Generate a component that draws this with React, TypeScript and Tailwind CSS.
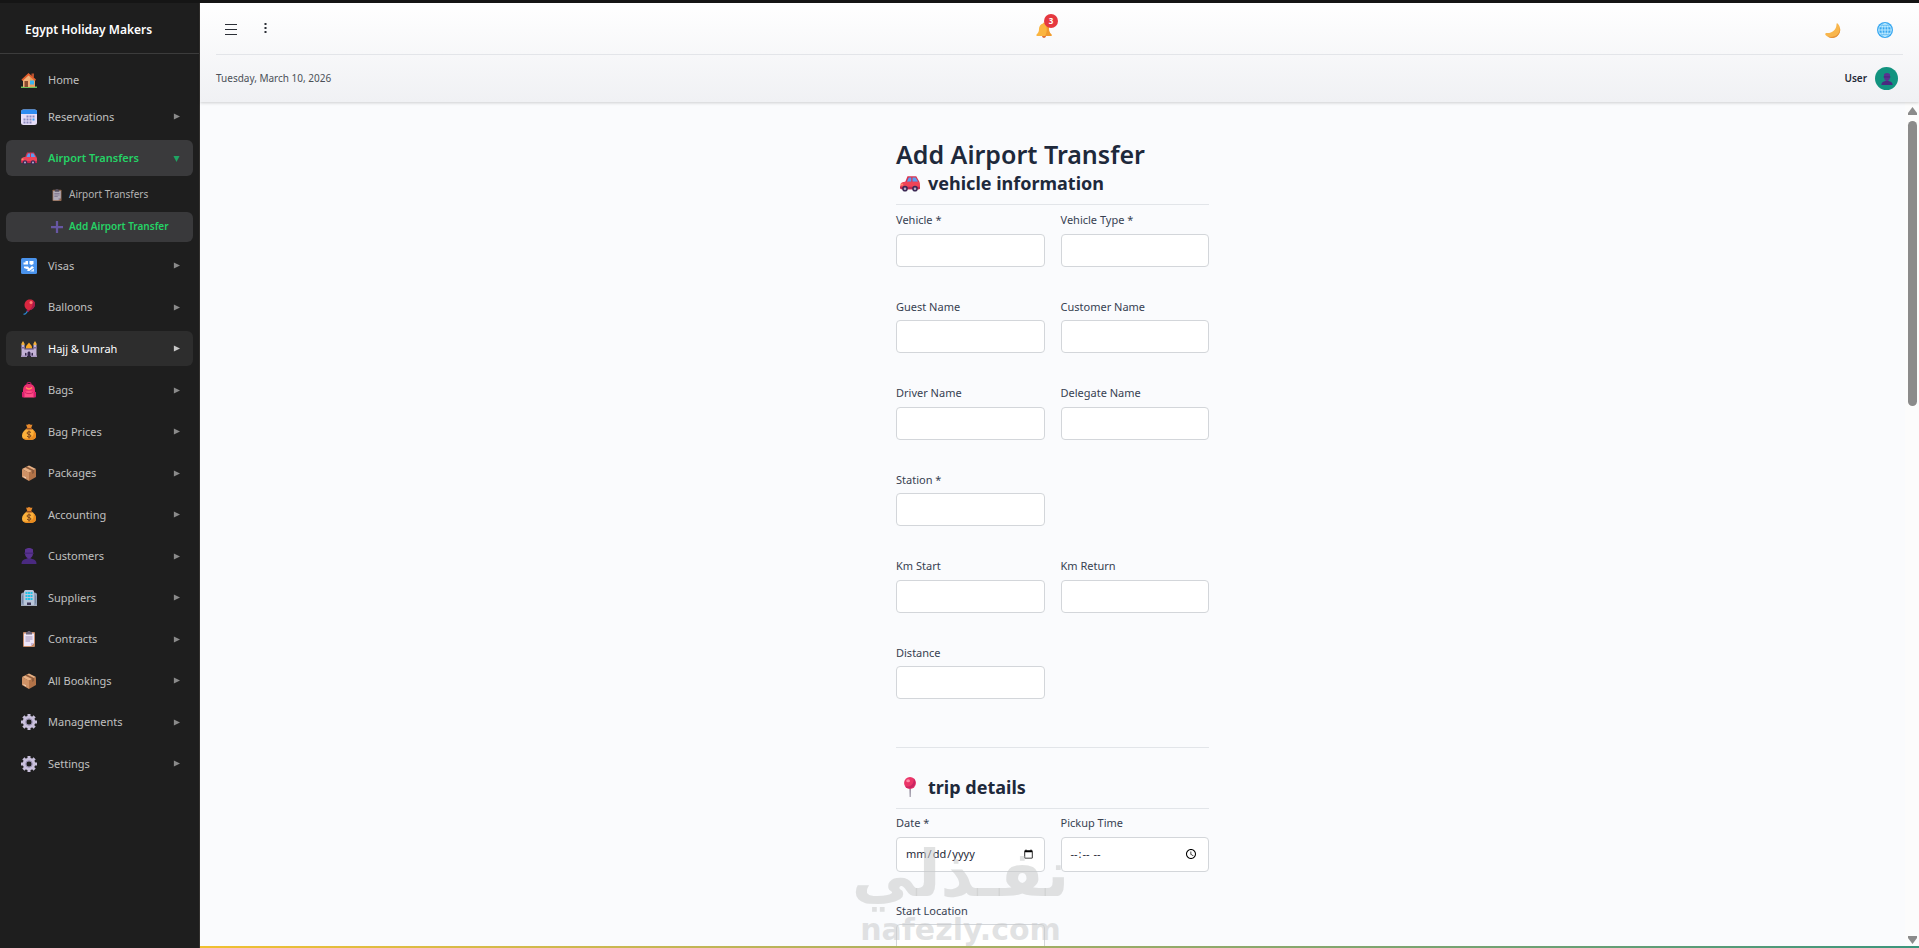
import React, { useState } from "react";
import clsx from "clsx";

type IconProps = { className?: string };

const HouseIcon: React.FC<IconProps> = ({ className }) => (
  <svg viewBox="0 0 32 32" className={className} aria-hidden="true">
    <path d="M0 29h32v3H0z" fill="#6fbf5a" />
    <path d="M21 3h5v8h-5z" fill="#b5502e" />
    <path d="M4 15 16 5l12 10v15H4z" fill="#f0b27a" />
    <path d="M18 9 28 16v14H18z" fill="#e8a05f" />
    <path d="M7 18h7v12H7z" fill="#8a4a2f" />
    <path d="M18 17h8v8h-8z" fill="#39b5f0" />
    <path d="M1 15 15 2l15 13-2 3L15 7 3 18z" fill="#e25f2e" />
  </svg>
);

const CalendarIcon: React.FC<IconProps> = ({ className }) => (
  <svg viewBox="0 0 32 32" className={className} aria-hidden="true">
    <rect x="0" y="1" width="32" height="31" rx="5" fill="#e6ddf7" />
    <path d="M0 10V6a5 5 0 0 1 5-5h22a5 5 0 0 1 5 5v4z" fill="#2f8cf0" />
    <g fill="#8d8bc0">
      <path d="M11 13h4v4h-4zM17 13h4v4h-4zM23 13h4v4h-4zM5 19h4v4H5zM11 19h4v4h-4zM17 19h4v4h-4zM5 25h4v4H5zM11 25h4v4h-4zM17 25h4v4h-4z" />
    </g>
    <path d="M23 19h4v4h-4z" fill="#3aa5f5" />
  </svg>
);

const CarIcon: React.FC<IconProps> = ({ className }) => (
  <svg viewBox="0 0 32 32" className={className} aria-hidden="true">
    <path d="M8 15 12 5h14l5 9v4H8z" fill="#d8334f" />
    <path d="m11 14 3-7h4v7zM20 7h5l4 7h-9z" fill="#5c9df0" />
    <path d="M1 19c0-4 4-5 8-5h20c2 0 3 2 3 5v4c0 2-1 3-3 3H3c-2 0-3-2-3-4z" fill="#ef4458" />
    <path d="M0 22h32v2c0 2-1 2-3 2H3c-2 0-3-1-3-4z" fill="#c22a52" />
    <circle cx="8" cy="25" r="4.5" fill="#3c2a55" />
    <circle cx="24" cy="25" r="4.5" fill="#3c2a55" />
    <circle cx="8" cy="25" r="2" fill="#b9aecb" />
    <circle cx="24" cy="25" r="2" fill="#b9aecb" />
    <path d="M1 17h4v3H1z" fill="#ff8a6a" />
  </svg>
);

const ClipboardIcon: React.FC<IconProps> = ({ className }) => (
  <svg viewBox="0 0 32 32" className={className} aria-hidden="true">
    <rect x="4" y="2" width="24" height="30" rx="2" fill="#c58b68" />
    <path d="M6 5h20v19l-6 6H6z" fill="#efe6f8" />
    <path d="M26 24h-6v6z" fill="#c9b8dc" />
    <path d="M10 3c0-1 1-1 3-1 0-3 6-3 6 0 2 0 3 0 3 1v4H10z" fill="#6d6478" />
    <path d="M9 12h14M9 16h14M9 20h9" stroke="#a294b8" strokeWidth="2" />
  </svg>
);

const PlusIcon: React.FC<IconProps> = ({ className }) => (
  <svg viewBox="0 0 32 32" className={className} aria-hidden="true">
    <path d="M13 0h6v13h13v6H19v13h-6V19H0v-6h13z" fill="#6757a3" />
  </svg>
);

const PassportIcon: React.FC<IconProps> = ({ className }) => (
  <svg viewBox="0 0 32 32" className={className} aria-hidden="true">
    <rect width="32" height="32" rx="3" fill="#4a93ec" />
    <path d="M5 9h4V6h5v7H5zM17 6h8v6l-4 2-4-2z" fill="#fff" />
    <path d="M6 17h8l3 4 5-5 4 3-9 7h-5l2-3-8-3z" fill="#fff" />
    <path d="M18 27h8v-6z" fill="#dcecff" />
  </svg>
);

const BalloonIcon: React.FC<IconProps> = ({ className }) => (
  <svg viewBox="0 0 32 32" className={className} aria-hidden="true">
    <path d="M14 21c0 4-2 4-3 6s-3 4-6 3" fill="none" stroke="#2a8bd8" strokeWidth="2.4" />
    <path d="M28 10c0 7-6 12-13 13-5-2-8-6-8-11C7 5 12 1 18 1s10 4 10 9z" fill="#d9263f" />
    <path d="M28 10c0 7-6 12-13 13 6-4 9-9 9-19 3 1 4 4 4 6z" fill="#a51c4c" />
    <ellipse cx="20" cy="7" rx="3" ry="3" fill="#ff7d76" />
    <path d="m12 21 5 2-2 3-4-2z" fill="#a51c4c" />
  </svg>
);

const MosqueIcon: React.FC<IconProps> = ({ className }) => (
  <svg viewBox="0 0 32 32" className={className} aria-hidden="true">
    <path d="M1 7h6v23H1zM25 7h6v23h-6zM6 17h20v13H6z" fill="#c3b2d6" />
    <path d="M0 12h8v3H0zM24 12h8v3h-8z" fill="#7d6a9a" />
    <path d="M4 0 7 5v3H1V5zM28 0l3 5v3h-6V5z" fill="#f3b13c" />
    <path d="M16 3c1 3 7 5 6 12H10c-1-7 5-9 6-12z" fill="#f9a825" />
    <path d="M8 15h16v3H8z" fill="#8b79a8" />
    <path d="M13 31v-7c0-4 6-4 6 0v7zM8 31v-6c0-2 3-2 3 0v6zM21 31v-6c0-2 3-2 3 0v6z" fill="#33254a" />
    <path d="M0 29h12v3H0zM20 29h12v3H20z" fill="#a795bf" />
  </svg>
);

const BackpackIcon: React.FC<IconProps> = ({ className }) => (
  <svg viewBox="0 0 32 32" className={className} aria-hidden="true">
    <path d="M12 7V4c0-4 8-4 8 0v3" fill="none" stroke="#b41a62" strokeWidth="2.4" />
    <path d="M4 17C4 8 9 4 16 4s12 4 12 13v12H4z" fill="#ee2f72" />
    <path d="M2 20h6v11H5c-2 0-3-1-3-3zM24 20h6v8c0 2-1 3-3 3h-3z" fill="#d61f6f" />
    <path d="M7 20c4-3 14-3 18 0v11H7z" fill="#ff4b86" />
    <path d="M10 11c4 4 8 4 12 0" fill="none" stroke="#ff9a57" strokeWidth="2.4" />
    <path d="M8 21c4 3 12 3 16 0" fill="none" stroke="#c2185b" strokeWidth="1.6" />
  </svg>
);

const MoneyBagIcon: React.FC<IconProps> = ({ className }) => (
  <svg viewBox="0 0 32 32" className={className} aria-hidden="true">
    <path d="M10 1c3 2 4-1 6-1s4 3 7 1l-3 8h-7z" fill="#e88a2c" />
    <path d="M12 9h9c5 3 9 8 9 14 0 7-5 9-14 9S2 30 2 23c0-6 5-11 10-14z" fill="#fbb03b" />
    <path d="M25 12c3 3 5 7 5 11 0 7-5 9-14 9-6 0-10-1-12-4 14 4 24-2 21-16z" fill="#e98a1e" />
    <path d="M11 8h11v3H11z" fill="#9a4f22" />
    <path d="M20 17c-2-2-8-2-8 1 0 4 8 2 8 6 0 3-6 3-8 0M16 13v16" fill="none" stroke="#7a451e" strokeWidth="2" />
  </svg>
);

const PackageIcon: React.FC<IconProps> = ({ className }) => (
  <svg viewBox="0 0 32 32" className={className} aria-hidden="true">
    <path d="M2 8 16 1l14 7-14 8z" fill="#e8b184" />
    <path d="m2 8 14 7v17L2 24z" fill="#cf9266" />
    <path d="m30 8-14 7v17l14-8z" fill="#b27348" />
    <path d="m8 5 14 7v6l4-2v-6L12 3z" fill="#8f5c3c" />
    <path d="m5 22 5 3v2l-5-3z" fill="#f3dcc8" />
  </svg>
);

const PersonIcon: React.FC<IconProps> = ({ className }) => (
  <svg viewBox="0 0 32 32" className={className} aria-hidden="true">
    <path d="M8 3c4-4 12-4 16 0v8c0 4-2 8-5 9v3h-6v-3c-3-1-5-5-5-9z" fill="#5a3391" />
    <path d="M1 32c0-7 4-9 11-11h8c7 2 11 4 11 11z" fill="#4a2a80" />
    <path d="M7 9h18v3H7z" fill="#48287a" />
  </svg>
);

const BuildingIcon: React.FC<IconProps> = ({ className }) => (
  <svg viewBox="0 0 32 32" className={className} aria-hidden="true">
    <path d="M0 9c0-3 3-4 7-4v25H0zM32 9c0-3-3-4-7-4v25h7z" fill="#92a3bd" />
    <path d="M6 3c0-2 2-3 4-3h12c2 0 4 1 4 3v28H6z" fill="#b9c6da" />
    <path d="M9 4h4v4H9zM14 4h4v4h-4zM19 4h4v4h-4zM9 10h4v4H9zM14 10h4v4h-4zM19 10h4v4h-4zM9 16h4v4H9zM14 16h4v4h-4zM19 16h4v4h-4z" fill="#22c3ea" />
    <path d="M12 25h8v6h-8z" fill="#3c3556" />
    <path d="M0 30h32v2H0z" fill="#a5adbd" />
    <path d="M3 11v16M29 11v16" stroke="#6f7f9c" strokeWidth="1.6" />
  </svg>
);

const GearIcon: React.FC<IconProps> = ({ className }) => (
  <svg viewBox="0 0 32 32" className={className} aria-hidden="true">
    <circle cx="16" cy="16" r="9" fill="none" stroke="#c9c0dc" strokeWidth="7" />
    <path
      d="M13 0h6v6h-6zM13 26h6v6h-6zM0 13h6v6H0zM26 13h6v6h-6zM2.600 6.900l4.300-4.300 4.200 4.300-4.200 4.200zM20.900 25.100l4.200-4.200 4.300 4.200-4.300 4.300zM20.900 6.900l4.200-4.300 4.300 4.300-4.300 4.200zM2.600 25.100l4.300-4.200 4.200 4.200-4.200 4.300z"
      fill="#c9c0dc"
    />
    <circle cx="16" cy="16" r="6.500" fill="none" stroke="#9389ad" strokeWidth="2" />
  </svg>
);

const PinIcon: React.FC<IconProps> = ({ className }) => (
  <svg viewBox="0 0 32 32" className={className} aria-hidden="true">
    <path d="M15 16h2.500l-.5 16h-1.500z" fill="#8d8798" />
    <circle cx="16" cy="9.500" r="9.500" fill="#ea3568" />
    <path d="M22 2a9.500 9.500 0 0 1-14 13c9 2 15-4 14-13z" fill="#c92563" />
    <ellipse cx="13" cy="6" rx="3" ry="2.500" fill="#ff8ba8" />
  </svg>
);

const BellIcon: React.FC<IconProps> = ({ className }) => (
  <svg viewBox="0 0 32 32" className={className} aria-hidden="true">
    <circle cx="16" cy="28.500" r="3.500" fill="#e0703a" />
    <path d="M14 3c0-3 5-3 5 0 5 1 7 6 7 11 0 6 2 8 5 11v3H1v-3c3-3 5-5 5-11 0-5 3-10 8-11z" fill="#fbb540" />
    <path d="M19 3c5 1 7 6 7 11 0 6 2 8 5 11v3H18c5-8 4-17 1-25z" fill="#f09a2e" />
  </svg>
);

const MoonIcon: React.FC<IconProps> = ({ className }) => (
  <svg viewBox="0 0 32 32" className={className} aria-hidden="true">
    <path d="M25 3c6 5 7 15 3 21-6 9-19 10-27 2-1-2 0-4 2-4 10 1 20-6 20-17 0-2 1-3 2-2z" fill="#f8b64c" />
    <path d="M29 10c3 13-9 23-24 19 8 6 19 3 23-5 3-5 3-9 1-14z" fill="#e4923a" />
  </svg>
);

const GlobeIcon: React.FC<IconProps> = ({ className }) => (
  <svg viewBox="0 0 32 32" className={className} aria-hidden="true">
    <circle cx="16" cy="16" r="16" fill="#38a7f0" />
    <g fill="none" stroke="#c9f0ff" strokeWidth="1.800">
      <circle cx="16" cy="16" r="12.500" />
      <ellipse cx="16" cy="16" rx="6" ry="12.500" />
      <path d="M16 3v26M3 16h26M5 9.500h22M5 22.500h22" />
    </g>
  </svg>
);

type MenuItem = {
  label: string;
  icon: React.FC<IconProps>;
  hovered?: boolean;
};

const menuItems: MenuItem[] = [
  { label: "Visas", icon: PassportIcon },
  { label: "Balloons", icon: BalloonIcon },
  { label: "Hajj & Umrah", icon: MosqueIcon, hovered: true },
  { label: "Bags", icon: BackpackIcon },
  { label: "Bag Prices", icon: MoneyBagIcon },
  { label: "Packages", icon: PackageIcon },
  { label: "Accounting", icon: MoneyBagIcon },
  { label: "Customers", icon: PersonIcon },
  { label: "Suppliers", icon: BuildingIcon },
  { label: "Contracts", icon: ClipboardIcon },
  { label: "All Bookings", icon: PackageIcon },
  { label: "Managements", icon: GearIcon },
  { label: "Settings", icon: GearIcon },
];

const Caret: React.FC<{ open?: boolean }> = ({ open }) => (
  <svg
    viewBox="0 0 8 8"
    className={clsx("size-[7px] shrink-0", open && "rotate-90 text-[#1fa463]")}
    aria-hidden="true"
  >
    <path d="M1 0.500 8 4 1 7.500z" fill="currentColor" />
  </svg>
);

const MenuButton: React.FC<{ item: MenuItem; open?: boolean; onClick?: () => void }> = ({
  item,
  open,
  onClick,
}) => {
  const Icon = item.icon;
  return (
    <button
      type="button"
      onClick={onClick}
      className={clsx(
        "flex w-full items-center gap-[11px] rounded-md pt-[10px] pr-[13px] pb-[9px] pl-[15px] text-left text-[11px] leading-normal",
        open && "bg-[#3a3a3c] font-semibold text-[#25d366]",
        item.hovered && "bg-[#2d2d2d] text-white",
        !open && !item.hovered && "text-[#c0c0c0]"
      )}
    >
      <Icon className="-my-1 size-4 shrink-0" />
      <span className="flex-1">{item.label}</span>
      <span className={item.hovered ? "text-[#c8c8c8]" : "text-[#8a8a8a]"}>
        <Caret open={open} />
      </span>
    </button>
  );
};

const Sidebar: React.FC = () => {
  const [open, setOpen] = useState(true);

  return (
    <aside className="flex w-[200px] shrink-0 flex-col border-r border-[#33312f] bg-[#1e1e1e]">
      <div className="flex h-[51px] items-center border-b border-[#3c3c3c] pt-[3px] pl-[25px] text-[12px] font-semibold text-white">
        Egypt Holiday Makers
      </div>
      <nav className="flex flex-col px-[6px] pt-2">
        <a
          href="#home"
          className="mb-px flex items-center gap-[11px] rounded-md pt-[10px] pb-[9px] pl-[15px] text-[11px] leading-normal text-[#c0c0c0]"
        >
          <HouseIcon className="-my-1 size-4" />
          Home
        </a>
        <MenuButton item={{ label: "Reservations", icon: CalendarIcon }} />
        <div className="py-[6px]">
          <MenuButton
            item={{ label: "Airport Transfers", icon: CarIcon }}
            open={open}
            onClick={() => setOpen(!open)}
          />
          {open && (
            <div className="mt-1 flex flex-col gap-[2px] text-[10px]">
              <a
                href="#transfers"
                className="flex h-[30px] items-center gap-[6px] rounded-md pl-[45px] text-[#b4b4b4]"
              >
                <ClipboardIcon className="size-3 opacity-70" />
                Airport Transfers
              </a>
              <a
                href="#add-transfer"
                className="flex h-[30px] items-center gap-[6px] rounded-md bg-[#39393b] pl-[45px] font-semibold text-[#25d366]"
              >
                <PlusIcon className="size-3" />
                Add Airport Transfer
              </a>
            </div>
          )}
        </div>
        <div className="flex flex-col gap-[6px]">
          {menuItems.map((item) => (
            <MenuButton key={item.label} item={item} />
          ))}
        </div>
      </nav>
    </aside>
  );
};

const Header: React.FC = () => (
  <header className="z-10 bg-linear-to-b from-white to-[#f0f1f4] px-4 shadow-[0_1px_3px_rgba(0,0,0,0.18)]">
    <div className="flex h-[52px] items-center justify-between border-b border-[#e3e5e9] pt-[3px]">
      <div className="flex items-center gap-[27px] pl-[9px] text-[#2b2f36]">
        <button type="button" aria-label="Toggle menu">
          <svg viewBox="0 0 12 12" className="size-3" shapeRendering="crispEdges">
            <path d="M0 .5h12M0 5.500h12M0 10.500h12" stroke="currentColor" />
          </svg>
        </button>
        <button type="button" aria-label="More" className="pb-1">
          <svg viewBox="0 0 3 12" className="h-3 w-[3px]">
            <path d="M.5 1h2v2h-2zM.5 5h2v2h-2zM.5 9h2v2h-2z" fill="currentColor" />
          </svg>
        </button>
      </div>
      <button type="button" aria-label="Notifications" className="relative mr-1">
        <BellIcon className="size-4" />
        <span className="absolute -top-2 left-2 flex size-[14px] items-center justify-center rounded-full bg-[#e5383f] text-[8px] font-bold text-white">
          3
        </span>
      </button>
      <div className="flex items-center gap-9 pr-[10px]">
        <button type="button" aria-label="Dark mode">
          <MoonIcon className="size-4" />
        </button>
        <button type="button" aria-label="Language">
          <GlobeIcon className="size-4" />
        </button>
      </div>
    </div>
    <div className="flex h-[47px] items-center justify-between text-[10px]">
      <span className="text-[#4b5058]">Tuesday, March 10, 2026</span>
      <div className="flex items-center gap-2 pr-[5px] font-semibold text-[#1f2937]">
        User
        <span className="flex size-[23px] items-center justify-center rounded-full bg-[#12937f]">
          <PersonIcon className="size-3" />
        </span>
      </div>
    </div>
  </header>
);

type FieldProps = {
  id: string;
  label: string;
  type?: "text" | "date" | "time";
};

const Field: React.FC<FieldProps> = ({ id, label, type = "text" }) => (
  <div>
    <label htmlFor={id} className="mb-[5px] block text-[11px] leading-normal text-[#374151]">
      {label}
    </label>
    <input
      id={id}
      type={type}
      className={clsx(
        "block w-full rounded border border-[#d3d6da] bg-white px-2 text-[11px] text-[#1f2937]",
        type === "text" ? "h-[33px]" : "h-[35px]"
      )}
    />
  </div>
);

const SectionTitle: React.FC<{ icon: React.FC<IconProps>; children: React.ReactNode }> = ({
  icon: Icon,
  children,
}) => (
  <h2 className="flex items-center gap-2 border-b border-[#e2e5e9] pb-2 pl-1 text-[18px] leading-[26px] font-bold text-[#1e293b]">
    <Icon className="size-5" />
    {children}
  </h2>
);

const TransferForm: React.FC = () => (
  <form className="mx-auto w-full max-w-[313px] pt-9">
    <h1 className="text-[25px] leading-[32px] font-semibold text-[#1e293b]">
      Add Airport Transfer
    </h1>
    <SectionTitle icon={CarIcon}>vehicle information</SectionTitle>
    <div className="grid grid-cols-2 gap-x-4 gap-y-8 border-b border-[#e2e5e9] pt-[7px] pb-12">
      <Field id="vehicle" label="Vehicle *" />
      <Field id="vehicleType" label="Vehicle Type *" />
      <Field id="guestName" label="Guest Name" />
      <Field id="customerName" label="Customer Name" />
      <Field id="driverName" label="Driver Name" />
      <Field id="delegateName" label="Delegate Name" />
      <div className="col-span-2 grid grid-cols-2 gap-x-4">
        <Field id="station" label="Station *" />
      </div>
      <Field id="kmStart" label="Km Start" />
      <Field id="kmReturn" label="Km Return" />
      <Field id="distance" label="Distance" />
    </div>
    <div className="pt-[26px]">
      <SectionTitle icon={PinIcon}>trip details</SectionTitle>
      <div className="grid grid-cols-2 gap-x-4 gap-y-[31px] pt-[6px]">
        <Field id="date" label="Date *" type="date" />
        <Field id="pickupTime" label="Pickup Time" type="time" />
        <Field id="startLocation" label="Start Location" />
      </div>
    </div>
  </form>
);

const ScrollBar: React.FC = () => (
  <div className="flex w-[14px] shrink-0 flex-col items-center bg-[#fcfcfc] pt-[5px] pb-[2px] pl-px text-[#8b8b8b]">
    <svg viewBox="0 0 9 8" className="h-2 w-[9px]" aria-hidden="true">
      <path d="M4.500 0 9 6v2H0V6z" fill="currentColor" />
    </svg>
    <div className="mt-[6px] flex-1">
      <div className="h-[35%] w-[9px] rounded-full bg-[#8b8b8b]" />
    </div>
    <svg viewBox="0 0 9 8" className="h-2 w-[9px]" aria-hidden="true">
      <path d="M4.500 8 9 2V0H0v2z" fill="currentColor" />
    </svg>
  </div>
);

const Watermark: React.FC = () => (
  <div className="pointer-events-none absolute bottom-0 left-1/2 flex -translate-x-1/2 flex-col items-center pr-[198px] text-[#c8cacb]/55">
    <span
      lang="ar"
      dir="rtl"
      className="font-['DejaVu_Sans',sans-serif] text-[64px] leading-[76px] font-bold"
    >
      نفـذلي
    </span>
    <span className="font-['DejaVu_Sans',sans-serif] text-[30px] leading-[36px] font-bold">
      nafezly.com
    </span>
  </div>
);

const App: React.FC = () => {
  return (
    <div className="flex h-screen flex-col overflow-hidden border-t-3 border-[#151515] bg-[#fafbfd] font-['Noto_Sans',sans-serif]">
      <div className="flex min-h-0 flex-1">
        <Sidebar />
        <div className="relative flex min-w-0 flex-1 flex-col">
          <Header />
          <main className="flex min-h-0 flex-1">
            <div className="flex-1 overflow-hidden">
              <TransferForm />
            </div>
            <ScrollBar />
          </main>
          <div className="h-[2px] bg-linear-to-r from-[#f0c02f] to-[#3a957c]" />
          <Watermark />
        </div>
      </div>
    </div>
  );
};

export default App;
